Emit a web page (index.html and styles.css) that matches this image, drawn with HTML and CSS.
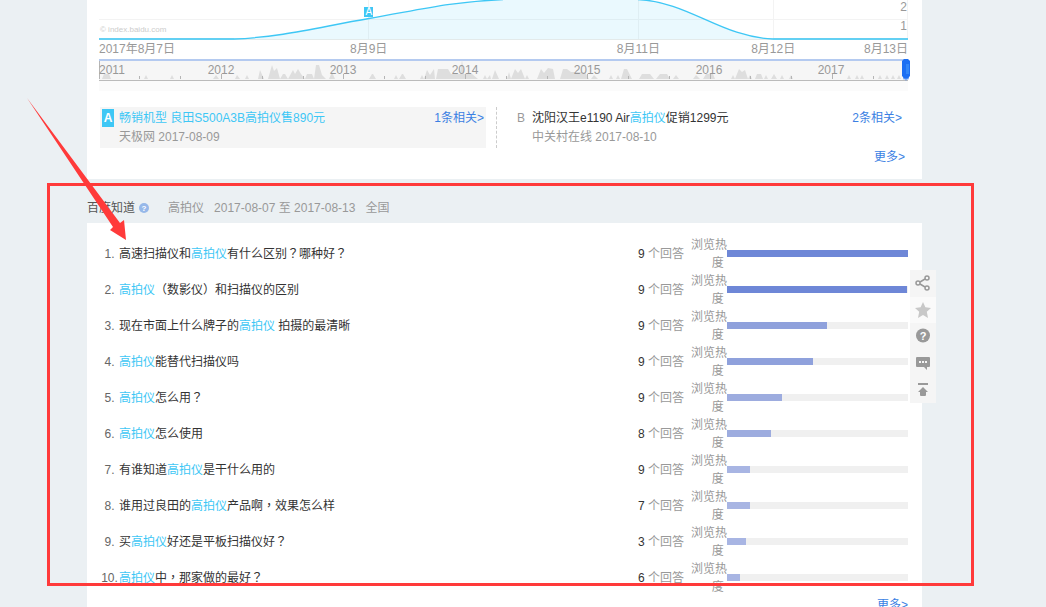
FILE: index.html
```html
<!DOCTYPE html>
<html lang="zh-CN">
<head>
<meta charset="utf-8">
<title>百度指数</title>
<link rel="stylesheet" href="styles.css">
</head>
<body>
<div class="page">
  <section class="panel trend">
    <div class="chart">
      <svg class="chart-plot" viewBox="0 0 809 41" preserveAspectRatio="none" aria-hidden="true">
        <path d="M0 19.500H809M269.500 0V39M539.500 0V39M674.500 0V39M808.500 0V39" stroke="#f3f3f3" fill="none"/>
        <path d="M135 39C185 37 220 27 270 18.500S350 2 404 -.5H539C590 2 622 37 674 39Z" fill="#3ec7f5" fill-opacity=".11"/>
        <path d="M0 39.500H809" stroke="#e3eaea" stroke-width="1"/>
        <path d="M135 39C185 37 220 27 270 18.500S350 2 404 -.5M539 -.5C590 2 622 37 674 39" fill="none" stroke="#3ec7f5" stroke-width="1.300"/>
        <path d="M0 39H135M674 39H809" stroke="#63d0f3" stroke-width="2"/>
      </svg>
      <span class="marker">A</span>
      <span class="watermark">© index.baidu.com</span>
      <div class="scale"><span>2</span><span>1</span></div>
    </div>
    <div class="dates">
      <span class="d-first">2017年8月7日</span><span class="d-9">8月9日</span><span class="d-11">8月11日</span><span class="d-12">8月12日</span><span class="d-last">8月13日</span>
    </div>
    <div class="timeline">
      <svg class="timeline-plot" viewBox="0 0 809 22" preserveAspectRatio="none" aria-hidden="true">
        <path fill="#dedede" d="M3 20l2-5h5l2 5zM45 20l2-4 2 4zM71 20l2-4 2 4zM114 20l3-4 3 4zM136 20l2-4 3 4zM146 20l2-4 2 4zM159 20l2-9 4 9zM169 20l4-14 2 6 3-3 3 11zM181 20l3-5h2l3 5zM189 20l5-9 2 4 3-5 3 5 4 5zM206 20l2-5h5l2 5zM215 20l2-14h3l3 10 4 4zM230 20l3-7 3 7zM270 20l3-5h1l3 5zM295 20l2-4 2 4zM300 20l3-5h1l3 5zM321 20l2-4 2 4zM325 20l3-9 3 5 4-6 1 10zM337 20l2-10h10l3 5h9l2-14 2 14h8l6 5zM384 20l2-4 2 4 3-4 1 4zM393 20l3-9 4 9zM408 20l2-7 2 7zM412 20l4-10 3 4 3-4 4 10zM426 20l2-4 2 4zM438 20l4-10 3 4 4-5 5 1 2 10zM461 20l3-10h4l4 3h14l4 7zM492 20l3-4 4 4zM510 20l2-4 2 4zM517 20l2-4 2 4zM522 20l3-10h3l5 10zM540 20l3-5h8l4 5zM557 20l4-5h7l3 5zM574 20l3-4 3 4zM594 20l3-4 4 4zM604 20l3-5h7l2 5zM632 20l2-4 2 4zM636 20l4-10 3 3 3-2 3 9zM649 20l2-4 2 4zM656 20l2-5h4l2 5zM665 20l2-4 2 4zM672 20l3-5 3 5zM681 20l2-4 2 4zM690 20l2-4 2 4zM748 20l2-4 2 4zM756 20l2-4 2 4zM761 20l2-4 2 4zM779 20l2-4 2 4zM786 20l2-4 2 4zM792 20l2-4 2 4zM798 20l2-4 2 4z"/>
        <path stroke="#b5b5b5" fill="none" d="M.5 2V20M122.500 15V20M244.500 15V20M366.500 15V20M488.500 15V20M611.500 15V20M733.500 15V20M40.500 17V20M81.500 17V20M163.500 17V20M204.500 17V20M285.500 17V20M326.500 17V20M407.500 17V20M448.500 17V20M529.500 17V20M570.500 17V20M651.500 17V20M692.500 17V20M774.500 17V20"/>
      </svg>
      <div class="years"><span class="year-first">2011</span><span>2012</span><span>2013</span><span>2014</span><span>2015</span><span>2016</span><span>2017</span></div>
      <svg class="handle" viewBox="0 0 8 22" aria-hidden="true"><path d="M2 0h4l2 2v15l-1 1-1 3-1-2-1 3-1-3-1 2-1-3-1-1V2z" fill="#1c6ff3"/><path d="M4 5h3v10H4z" fill="#3387f7"/></svg>
    </div>
    <div class="timeline-foot"></div>
    <div class="news">
      <article class="news-item active">
        <span class="letter">A</span>
        <div class="news-text"><a class="headline" href="#"><em>畅销机型 良田S500A3B高拍仪售890元</em></a><span class="source">天极网 2017-08-09</span></div>
        <a class="link" href="#">1条相关&gt;</a>
      </article>
      <article class="news-item second">
        <span class="letter">B</span>
        <div class="news-text"><a class="headline" href="#">沈阳汉王e1190 Air<em>高拍仪</em>促销1299元</a><span class="source">中关村在线 2017-08-10</span></div>
        <a class="link" href="#">2条相关&gt;</a>
      </article>
    </div>
    <div class="more"><a class="link" href="#">更多&gt;</a></div>
  </section>

  <header class="heading">
    <h2>百度知道</h2>
    <svg class="help" viewBox="0 0 10 10" aria-hidden="true"><circle cx="5" cy="5" r="5" fill="#96b8e9"/><text x="5" y="8" text-anchor="middle">?</text></svg>
    <span>高拍仪</span><span>2017-08-07 至 2017-08-13</span><span>全国</span>
  </header>

  <section class="panel zhidao">
    <ol class="questions">
      <li><span class="num">1.</span><a href="#">高速扫描仪和<em>高拍仪</em>有什么区别<i lang="zh-TW">？</i>哪种好<i lang="zh-TW">？</i></a><span class="answers"><b>9</b> 个回答</span><span class="heat">浏览热度&nbsp;</span><div class="bar"><div class="fill top" style="width:100%"></div></div></li>
      <li><span class="num">2.</span><a href="#"><em>高拍仪</em><i lang="zh-TW">（</i>数影仪<i lang="zh-TW">）</i>和扫描仪的区别</a><span class="answers"><b>9</b> 个回答</span><span class="heat">浏览热度&nbsp;</span><div class="bar"><div class="fill top" style="width:99.500%"></div></div></li>
      <li><span class="num">3.</span><a href="#">现在市面上什么牌子的<em>高拍仪</em> 拍摄的最清晰</a><span class="answers"><b>9</b> 个回答</span><span class="heat">浏览热度&nbsp;</span><div class="bar"><div class="fill mid" style="width:55.250%"></div></div></li>
      <li><span class="num">4.</span><a href="#"><em>高拍仪</em>能替代扫描仪吗</a><span class="answers"><b>9</b> 个回答</span><span class="heat">浏览热度&nbsp;</span><div class="bar"><div class="fill mid" style="width:47.500%"></div></div></li>
      <li><span class="num">5.</span><a href="#"><em>高拍仪</em>怎么用<i lang="zh-TW">？</i></a><span class="answers"><b>9</b> 个回答</span><span class="heat">浏览热度&nbsp;</span><div class="bar"><div class="fill low" style="width:30.400%"></div></div></li>
      <li><span class="num">6.</span><a href="#"><em>高拍仪</em>怎么使用</a><span class="answers"><b>8</b> 个回答</span><span class="heat">浏览热度&nbsp;</span><div class="bar"><div class="fill low" style="width:24.300%"></div></div></li>
      <li><span class="num">7.</span><a href="#">有谁知道<em>高拍仪</em>是干什么用的</a><span class="answers"><b>9</b> 个回答</span><span class="heat">浏览热度&nbsp;</span><div class="bar"><div class="fill least" style="width:12.700%"></div></div></li>
      <li><span class="num">8.</span><a href="#">谁用过良田的<em>高拍仪</em>产品啊<i lang="zh-TW">，</i>效果怎么样</a><span class="answers"><b>7</b> 个回答</span><span class="heat">浏览热度&nbsp;</span><div class="bar"><div class="fill least" style="width:12.700%"></div></div></li>
      <li><span class="num">9.</span><a href="#">买<em>高拍仪</em>好还是平板扫描仪好<i lang="zh-TW">？</i></a><span class="answers"><b>3</b> 个回答</span><span class="heat">浏览热度&nbsp;</span><div class="bar"><div class="fill least" style="width:10.500%"></div></div></li>
      <li><span class="num">10.</span><a href="#"><em>高拍仪</em>中<i lang="zh-TW">，</i>那家做的最好<i lang="zh-TW">？</i></a><span class="answers"><b>6</b> 个回答</span><span class="heat">浏览热度&nbsp;</span><div class="bar"><div class="fill least" style="width:7.200%"></div></div></li>
    </ol>
    <div class="more list-more"><a class="link" href="#">更多&gt;</a></div>
  </section>

  <nav class="tools" aria-label="工具">
    <button type="button" aria-label="分享"><svg viewBox="0 0 16 16"><g fill="none" stroke="#999" stroke-width="1.500"><path d="M10 4L5 7M5 9l5 3"/><circle cx="3" cy="8" r="2"/><circle cx="12" cy="3" r="2"/><circle cx="12" cy="13" r="2"/></g></svg></button>
    <button type="button" class="light" aria-label="收藏"><svg viewBox="0 0 16 16"><path d="M8 0l2.400 5.300 5.600.6-4.200 3.900L13 16l-5-3-5 3 1.200-6.200L0 5.900l5.600-.6z" fill="#c8c8c8"/></svg></button>
    <button type="button" aria-label="帮助"><svg viewBox="0 0 16 16"><circle cx="8" cy="7.500" r="7" fill="#999"/><text x="8" y="11.500" text-anchor="middle">?</text></svg></button>
    <button type="button" aria-label="反馈"><svg viewBox="0 0 16 16"><path d="M2 2h12q1 0 1 1v8q0 1-1 1h-2v3l-3-3H2q-1 0-1-1V3q0-1 1-1z" fill="#999"/><path d="M4 6h2v2H4zM7 6h2v2H7zM10 6h2v2h-2z" fill="#f5f5f5"/></svg></button>
    <button type="button" aria-label="返回顶部"><svg viewBox="0 0 16 16"><path d="M3 1h10v2H3zM8 5l5 5h-2v3q0 1-1 1H6q-1 0-1-1v-3H3z" fill="#999"/></svg></button>
  </nav>
</div>
<div class="callout" aria-hidden="true"></div>
<svg class="arrow" viewBox="0 0 101 144" aria-hidden="true"><path d="M1 0L87 129l-3 3 16 10-2-20-4 3z" fill="#ff3a3a"/></svg>
</body>
</html>
```
FILE: styles.css
```css
* { box-sizing: border-box; }
body {
  margin: 0;
  position: relative;
  background: #ebf0f3;
  color: #333;
  font: 12px/18px "Liberation Sans", "Noto Sans CJK SC", sans-serif;
}
a { color: inherit; text-decoration: none; }
em { font-style: normal; color: #3ec7f5; }
i { font-style: normal; font-family: "Noto Sans CJK TC", sans-serif; line-height: 1; }
.page { position: relative; margin: 0 124px 0 87px; }
.panel { background: #fff; }
.link { color: #3b7fe3; white-space: nowrap; }

.trend { padding: 0 14px 13px 12px; }
.chart { position: relative; height: 41px; }
.chart-plot { display: block; width: 100%; height: 41px; }
.marker {
  position: absolute;
  left: 33.3%;
  top: 7px;
  width: 9px;
  margin-left: -4px;
  background: #3ec7f5;
  color: #fff;
  font-size: 10px;
  line-height: 10px;
  text-align: center;
}
.watermark {
  position: absolute;
  left: 1px;
  top: 24px;
  color: #ccc;
  font-size: 8px;
  line-height: 12px;
}
.scale {
  position: absolute;
  right: 1px;
  top: -2px;
  display: flex;
  flex-direction: column;
  color: #999;
  line-height: 19px;
}
.dates {
  display: grid;
  grid-template-columns: repeat(12, minmax(0, 1fr));
  padding-bottom: 2px;
  color: #999;
  line-height: 16px;
  white-space: nowrap;
}
.dates span { display: flex; justify-content: center; }
.dates .d-first { grid-column: 1 / 4; justify-content: flex-start; }
.d-9 { grid-column: 4 / 6; }
.d-11 { grid-column: 8 / 10; }
.d-12 { grid-column: 10 / 12; }
.dates .d-last { grid-column: 12; justify-content: flex-end; }
.timeline {
  position: relative;
  height: 22px;
  border-top: 2px solid #b4caf0;
  border-bottom: 1px solid #bbb;
  background: #f6f6f6;
}
.timeline-plot { position: absolute; left: 0; top: -2px; width: 100%; height: 22px; }
.years {
  position: relative;
  display: grid;
  grid-template-columns: 61fr repeat(6, 122fr) 16fr;
  color: #999;
  line-height: 18px;
  text-align: center;
}
.year-first { text-align: left; }
.handle { position: absolute; right: -2px; top: -2px; width: 8px; height: 22px; }
.timeline-foot { height: 10px; background: #fbfbfb; }
.news {
  display: grid;
  grid-template-columns: 386fr 408fr;
  gap: 10px;
  padding: 16px 4px 0 1px;
}
.news-item { display: flex; padding: 2px 2px 1px; line-height: 19px; }
.news-item.active { background: #f5f5f5; }
.news-item.second { border-left: 1px dashed #ccc; padding-left: 20px; }
.letter { width: 12px; margin-right: 5px; color: #999; }
.second .letter { width: 10px; }
.active .letter {
  height: 18px;
  background: #3ec7f5;
  color: #fff;
  font-weight: bold;
  line-height: 18px;
  text-align: center;
}
.news-text { flex: 1; min-width: 0; }
.headline, .source { display: block; }
.source { color: #999; }
.more { padding: 0 3px 0 0; text-align: right; }

.heading {
  display: flex;
  align-items: center;
  padding: 20px 0 6px;
  color: #999;
}
.heading h2 { margin: 0 4px 0 0; color: #555; font-size: 12px; font-weight: normal; }
.help { width: 10px; height: 10px; margin-right: 9px; }
.help text { fill: #fff; font-size: 8px; font-weight: bold; }
.heading span { margin-left: 10px; }

.zhidao { padding: 13px 14px 20px 13px; }
.questions { margin: 0; padding: 0; list-style: none; }
.questions li {
  display: grid;
  grid-template-columns: 19px minmax(0, 1fr) 53px 36px 181px;
  align-items: center;
  min-height: 36px;
}
.num { color: #666; text-align: center; }
.answers { color: #999; }
.answers b { color: #333; font-weight: normal; }
.heat { color: #999; text-align: right; word-break: break-all; }
.bar { height: 7px; margin-bottom: 2px; background: #f0f0f0; }
.fill { height: 100%; }
.fill.top { background: #6e87d7; }
.fill.mid { background: #8fa1dc; }
.fill.low { background: #9dacdf; }
.fill.least { background: #a8b5e3; }
.list-more { padding-right: 0; }

.tools {
  position: absolute;
  right: -14px;
  top: 270px;
  width: 26px;
  height: 133px;
  display: flex;
  flex-direction: column;
  background: #f5f5f5;
}
.tools button {
  flex: 1;
  display: flex;
  align-items: center;
  justify-content: center;
  padding: 0;
  border: 0;
  background: none;
}
.tools .light { background: #fafafa; }
.tools svg { width: 16px; height: 16px; }
.tools text { fill: #fff; font-size: 11px; font-weight: bold; }

.callout {
  position: absolute;
  left: 47px;
  right: 72px;
  top: 183px;
  height: 403px;
  border: 3px solid #ff3a3a;
  pointer-events: none;
}
.arrow { position: absolute; left: 26px; top: 98px; width: 101px; height: 144px; pointer-events: none; }
```
